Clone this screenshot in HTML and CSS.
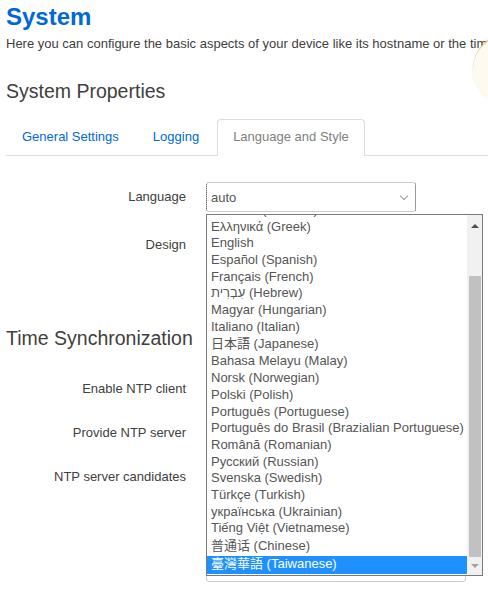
FILE: index.html
```html
<!DOCTYPE html>
<html lang="en">
<head>
  <meta charset="UTF-8">
  <title>System - LuCI</title>
  <link rel="stylesheet" href="styles.css">
</head>
<body>
  <div class="page">
    <h2 class="title">System</h2>
    <p class="desc">Here you can configure the basic aspects of your device like its hostname or the timezone.</p>

    <h3 class="section-title">System Properties</h3>

    <!-- Tabs -->
    <ul class="tabs">
      <li class="tab"><a href="#">General Settings</a></li>
      <li class="tab"><a href="#">Logging</a></li>
      <li class="tab active"><a href="#">Language and Style</a></li>
    </ul>

    <div class="tab-content">
      <div class="cbi-value lang-row">
        <label class="cbi-value-title">Language</label>
        <div class="cbi-value-field">
          <div class="select focused">auto<span class="chevron"></span></div>
        </div>
      </div>
      <div class="cbi-value lang-row">
        <label class="cbi-value-title">Design</label>
        <div class="cbi-value-field">
          <div class="select">Bootstrap<span class="chevron"></span></div>
        </div>
      </div>
    </div>

    <h3 class="section-title ntp-title">Time Synchronization</h3>

    <div class="cbi-value">
      <label class="cbi-value-title">Enable NTP client</label>
      <div class="cbi-value-field"><span class="checkbox"></span></div>
    </div>
    <div class="cbi-value">
      <label class="cbi-value-title">Provide NTP server</label>
      <div class="cbi-value-field"><span class="checkbox"></span></div>
    </div>
    <div class="cbi-value">
      <label class="cbi-value-title">NTP server candidates</label>
      <div class="cbi-value-field server-list">
        <div class="text-input">0.openwrt.pool.ntp.org</div>
        <div class="text-input">1.openwrt.pool.ntp.org</div>
        <div class="text-input">2.openwrt.pool.ntp.org</div>
      </div>
    </div>

    <!-- Open language dropdown -->
    <div class="dropdown">
      <div class="options">
        <div class="option">auto</div>
        <div class="option">Català (Catalan)</div>
        <div class="option">Čeština (Czech)</div>
        <div class="option">Deutsch (German)</div>
        <div class="option">Ελληνικά (Greek)</div>
        <div class="option">English</div>
        <div class="option">Español (Spanish)</div>
        <div class="option">Français (French)</div>
        <div class="option">עִבְרִית (Hebrew)</div>
        <div class="option">Magyar (Hungarian)</div>
        <div class="option">Italiano (Italian)</div>
        <div class="option cjk jp">日本語 (Japanese)</div>
        <div class="option">Bahasa Melayu (Malay)</div>
        <div class="option">Norsk (Norwegian)</div>
        <div class="option">Polski (Polish)</div>
        <div class="option">Português (Portuguese)</div>
        <div class="option">Português do Brasil (Brazialian Portuguese)</div>
        <div class="option">Română (Romanian)</div>
        <div class="option">Русский (Russian)</div>
        <div class="option">Svenska (Swedish)</div>
        <div class="option">Türkçe (Turkish)</div>
        <div class="option">українська (Ukrainian)</div>
        <div class="option">Tiếng Việt (Vietnamese)</div>
        <div class="option cjk sc">普通话 (Chinese)</div>
        <div class="option cjk tc selected">臺灣華語 (Taiwanese)</div>
      </div>
      <div class="scrollbar">
        <span class="arrow up"></span>
        <span class="thumb"></span>
        <span class="arrow down"></span>
      </div>
    </div>

    <!-- Loading indicator peeking in from the right -->
    <div class="spinner"></div>
  </div>
</body>
</html>
```

FILE: styles.css
```css
/* General Styles */
* {
  margin: 0;
  padding: 0;
  box-sizing: border-box;
}

html, body {
  overflow: hidden;
  height: 100%;
}

body {
  font-family: 'Liberation Sans', Arial, sans-serif;
  font-size: 13px;
  line-height: 18px;
  color: #404040;
  background: #fff;
}

.page {
  position: relative;
  padding: 0 6px;
  width: 640px;
}

.title {
  margin-top: 3px;
  font-size: 24px;
  line-height: 28px;
  font-weight: bold;
  color: #0069d6;
}

.desc {
  margin-top: 4px;
  white-space: nowrap;
}

.section-title {
  margin-top: 26px;
  font-size: 19.5px;
  line-height: 24px;
  font-weight: normal;
  color: #404040;
}

/* Tabs */
.tabs {
  display: flex;
  list-style: none;
  margin-top: 16px;
  border-bottom: 1px solid #ddd;
}

.tab {
  margin-right: 2px;
  margin-bottom: -1px;
}

.tab a {
  display: block;
  padding: 8px 15px 9px;
  border: 1px solid transparent;
  border-bottom: none;
  border-radius: 4px 4px 0 0;
  color: #0069d6;
  text-decoration: none;
}

.tab.active a {
  border-color: #ddd;
  background: #fff;
  color: #808080;
  padding-bottom: 10px;
}

.tab-content {
  margin-top: 26px;
}

/* Form rows */
.cbi-value {
  display: flex;
  gap: 20px;
  margin-bottom: 14px;
  min-height: 30px;
}

.lang-row {
  margin-bottom: 18px;
}

.cbi-value-title {
  width: 180px;
  flex-shrink: 0;
  padding-top: 6px;
  text-align: right;
}

.select {
  position: relative;
  width: 210px;
  height: 30px;
  padding: 6px 4px;
  border: 1px solid #ccc;
  border-radius: 3px;
  color: #555;
}

.select.focused {
  border-left: 1px dotted #333;
  border-right: 1px dotted #333;
}

.chevron {
  position: absolute;
  right: 8px;
  top: 10px;
  width: 6px;
  height: 6px;
  border-right: 1.5px solid #999;
  border-bottom: 1.5px solid #999;
  transform: rotate(45deg);
}

.ntp-title {
  margin-top: 66px;
  margin-bottom: 24px;
}

.checkbox {
  display: block;
  width: 14px;
  height: 14px;
  margin-top: 8px;
  border: 1px solid #999;
  border-radius: 2px;
}

.server-list {
  display: flex;
  flex-direction: column;
  gap: 15px;
}

.text-input {
  width: 260px;
  height: 30px;
  padding: 6px 4px;
  border: 1px solid #ccc;
  border-radius: 3px;
  color: #555;
}

/* Open dropdown list */
.dropdown {
  position: absolute;
  left: 206px;
  top: 211px;
  width: 277px;
  height: 362px;
  border: 1px solid #7a7a7a;
  background: #fff;
  display: flex;
}

.options {
  flex: 1;
  display: flex;
  flex-direction: column;
  justify-content: flex-end;
  overflow: hidden;
  padding-bottom: 1px;
}

.option {
  flex-shrink: 0;
  height: 16.7px;
  line-height: 14.7px;
  padding: 0 0 2px 4px;
  white-space: nowrap;
  color: #555;
}

.option.cjk {
  height: 18px;
  line-height: 16px;
}

.option.jp {
  font-family: 'Liberation Sans', 'Noto Sans CJK JP', sans-serif;
}

.option.sc {
  font-family: 'Liberation Sans', 'Noto Sans CJK SC', sans-serif;
}

.option.tc {
  font-family: 'Liberation Sans', 'Noto Sans CJK TC', sans-serif;
}

.option.selected {
  background: #1e90ff;
  color: #fff;
}

.scrollbar {
  width: 15px;
  background: #f1f1f1;
  display: flex;
  flex-direction: column;
  align-items: center;
}

.arrow {
  width: 0;
  height: 0;
  border-left: 4px solid transparent;
  border-right: 4px solid transparent;
}

.arrow.up {
  margin-top: 9px;
  border-bottom: 4px solid #505050;
}

.arrow.down {
  margin-bottom: 7px;
  border-top: 4px solid #a3a3a3;
}

.thumb {
  width: 12px;
  flex: 1;
  margin: 48px 0 7px;
  background: #c1c1c1;
}

/* Spinner overlay */
.spinner {
  position: absolute;
  left: 473px;
  top: 30px;
  width: 72px;
  height: 72px;
  border-radius: 50%;
  border-top: 2px solid #e6c58a;
  background: #fffaf0;
  box-shadow: 0 0 3px rgba(0, 0, 0, 0.08);
}
```
